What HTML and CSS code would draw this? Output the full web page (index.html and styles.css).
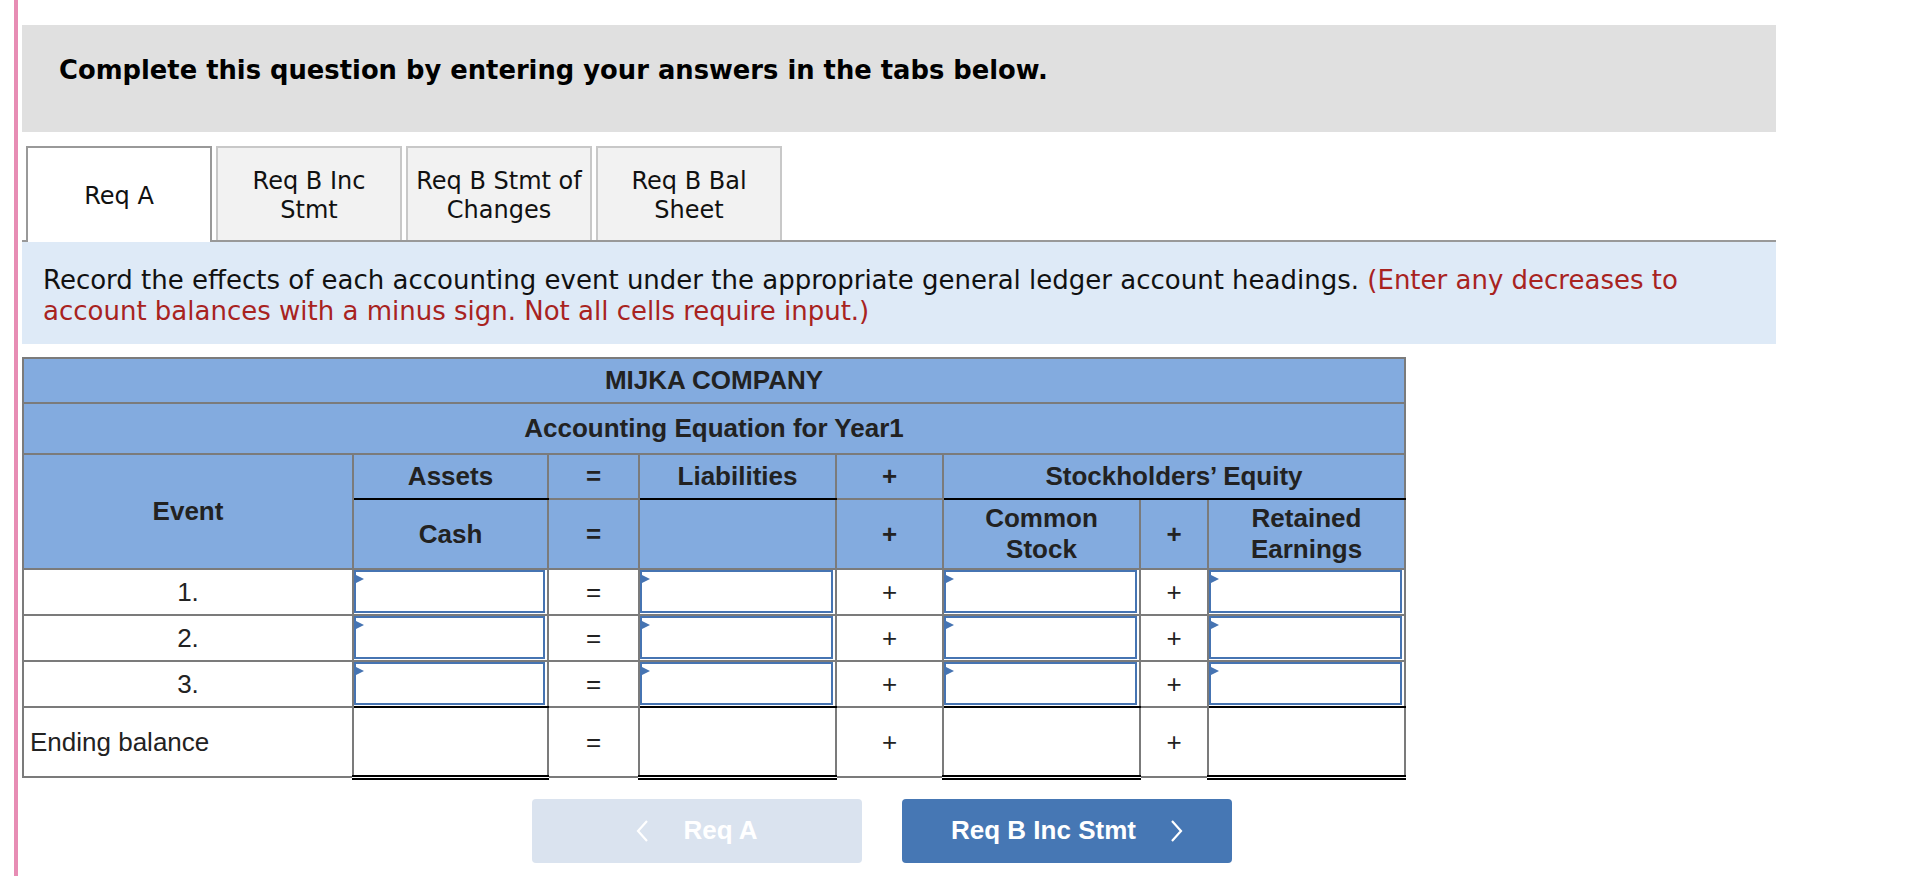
FILE: index.html
```html
<!DOCTYPE html>
<html lang="en">
<head>
<meta charset="utf-8">
<title>Req A</title>
<link rel="stylesheet" href="styles.css">
</head>
<body>
<div class="page">
  <div class="prompt">Complete this question by entering your answers in the tabs below.</div>

  <div class="tabs">
    <div class="tab active">Req A</div>
    <div class="tab">Req B Inc<br>Stmt</div>
    <div class="tab">Req B Stmt of<br>Changes</div>
    <div class="tab">Req B Bal<br>Sheet</div>
  </div>

  <div class="instructions">Record the effects of each accounting event under the appropriate general ledger account headings. <span class="hint">(Enter any decreases to</span><br><span class="hint">account balances with a minus sign. Not all cells require input.)</span></div>

  <table class="eq">
    <colgroup>
      <col class="c-event"><col class="c-val"><col class="c-op"><col class="c-val2"><col class="c-op2"><col class="c-val2"><col class="c-op3"><col class="c-val2">
    </colgroup>
    <tr class="h1"><th colspan="8">MIJKA COMPANY</th></tr>
    <tr class="h2"><th colspan="8">Accounting Equation for Year1</th></tr>
    <tr class="h3">
      <th rowspan="2">Event</th>
      <th class="ul">Assets</th>
      <th>=</th>
      <th class="ul">Liabilities</th>
      <th>+</th>
      <th class="ul" colspan="3">Stockholders’ Equity</th>
    </tr>
    <tr class="h4">
      <th>Cash</th>
      <th>=</th>
      <th></th>
      <th>+</th>
      <th>Common<br>Stock</th>
      <th>+</th>
      <th>Retained<br>Earnings</th>
    </tr>
    <tr class="row">
      <td>1.</td>
      <td class="in"><div class="box"></div></td>
      <td>=</td>
      <td class="in"><div class="box"></div></td>
      <td>+</td>
      <td class="in"><div class="box"></div></td>
      <td>+</td>
      <td class="in"><div class="box"></div></td>
    </tr>
    <tr class="row">
      <td>2.</td>
      <td class="in"><div class="box"></div></td>
      <td>=</td>
      <td class="in"><div class="box"></div></td>
      <td>+</td>
      <td class="in"><div class="box"></div></td>
      <td>+</td>
      <td class="in"><div class="box"></div></td>
    </tr>
    <tr class="row">
      <td>3.</td>
      <td class="in ul"><div class="box"></div></td>
      <td>=</td>
      <td class="in ul"><div class="box"></div></td>
      <td>+</td>
      <td class="in ul"><div class="box"></div></td>
      <td>+</td>
      <td class="in ul"><div class="box"></div></td>
    </tr>
    <tr class="end">
      <td class="lbl">Ending balance</td>
      <td class="dbl"></td>
      <td>=</td>
      <td class="dbl"></td>
      <td>+</td>
      <td class="dbl"></td>
      <td>+</td>
      <td class="dbl"></td>
    </tr>
  </table>

  <div class="nav">
    <div class="btn prev">
      <svg class="chev" width="13" height="24" viewBox="0 0 13 24"><polyline points="11,2 2,12 11,22" fill="none" stroke="#fff" stroke-width="2.2"/></svg>
      <span>Req A</span>
    </div>
    <div class="btn next">
      <span>Req B Inc Stmt</span>
      <svg class="chev" width="13" height="24" viewBox="0 0 13 24"><polyline points="2,2 11,12 2,22" fill="none" stroke="#fff" stroke-width="2.2"/></svg>
    </div>
  </div>
</div>
</body>
</html>
```

FILE: styles.css
```css
* { box-sizing: border-box; }

html, body {
  margin: 0;
  padding: 0;
  background: #fff;
}

body {
  font-family: "DejaVu Sans", Verdana, sans-serif;
  color: #111;
}

.page {
  margin-left: 14px;
  border-left: 4px solid #e78db4;
  padding-left: 4px;
  padding-top: 25px;
  width: 1762px;
  min-height: 876px;
}

.prompt {
  background: #e0e0e0;
  height: 107px;
  padding: 30px 37px 0;
  font-weight: bold;
  font-size: 25.8px;
  line-height: 31px;
  color: #000;
}

.tabs {
  display: flex;
  gap: 4px;
  margin-top: 14px;
  padding-left: 4px;
  border-bottom: 2px solid #999;
}

.tab {
  width: 186px;
  height: 94px;
  padding-top: 4px;
  border: 2px solid #c8c8c8;
  border-bottom: none;
  background: #f2f2f2;
  display: flex;
  align-items: center;
  justify-content: center;
  text-align: center;
  font-size: 24px;
  line-height: 29px;
  color: #111;
}

.tab.active {
  background: #fff;
  border-color: #999;
  height: 96px;
  margin-bottom: -2px;
  padding-top: 2px;
}

.instructions {
  background: #deeaf7;
  padding: 23px 20px 17px 21px;
  font-size: 26px;
  line-height: 31px;
  color: #111;
}

.hint { color: #a8231f; }

.eq {
  margin-top: 13px;
  border-collapse: collapse;
  table-layout: fixed;
  width: 1382px;
  font-family: "Liberation Sans", Arial, sans-serif;
  font-size: 26px;
  line-height: 31px;
  color: #222;
}

.c-event { width: 330px; }
.c-val { width: 195px; }
.c-op { width: 91px; }
.c-val2 { width: 197px; }
.c-op2 { width: 107px; }
.c-op3 { width: 68px; }

.eq th, .eq td {
  border: 2px solid #7b7b7b;
  padding: 0;
  text-align: center;
  vertical-align: middle;
}

.eq th {
  background: #83abdf;
  font-weight: bold;
}

.eq th.ul { border-bottom: 2px solid #000; }

.h1 { height: 45px; }
.h2 { height: 51px; }
.h3 { height: 45px; }
.h4 { height: 70px; }
.row { height: 46px; }
.end { height: 70px; }

.eq td { background: #fff; }

.eq td.in {
  padding: 0 2px 1px 0;
  vertical-align: top;
}

.eq td.in.ul { border-bottom: 2px solid #000; }

.box {
  position: relative;
  height: 43px;
  border: 2px solid #4674b2;
  background: #fff;
}

.box::before {
  content: "";
  position: absolute;
  top: 2px;
  left: -2px;
  width: 0;
  height: 0;
  border-top: 5px solid transparent;
  border-bottom: 5px solid transparent;
  border-left: 10px solid #4674b2;
}

.eq td.lbl {
  text-align: left;
  padding-left: 6px;
}

.eq td.dbl { border-bottom: 5px double #000; }

.nav {
  display: flex;
  gap: 40px;
  margin-top: 19px;
  padding-left: 510px;
}

.btn {
  width: 330px;
  height: 64px;
  border-radius: 4px;
  display: flex;
  align-items: center;
  justify-content: center;
  gap: 34px;
  font-family: "Liberation Sans", Arial, sans-serif;
  font-weight: bold;
  font-size: 26px;
  color: #fff;
}

.btn.prev { background: #dae3ef; }
.btn.next { background: #4677b4; }

.chev { display: block; }
```
